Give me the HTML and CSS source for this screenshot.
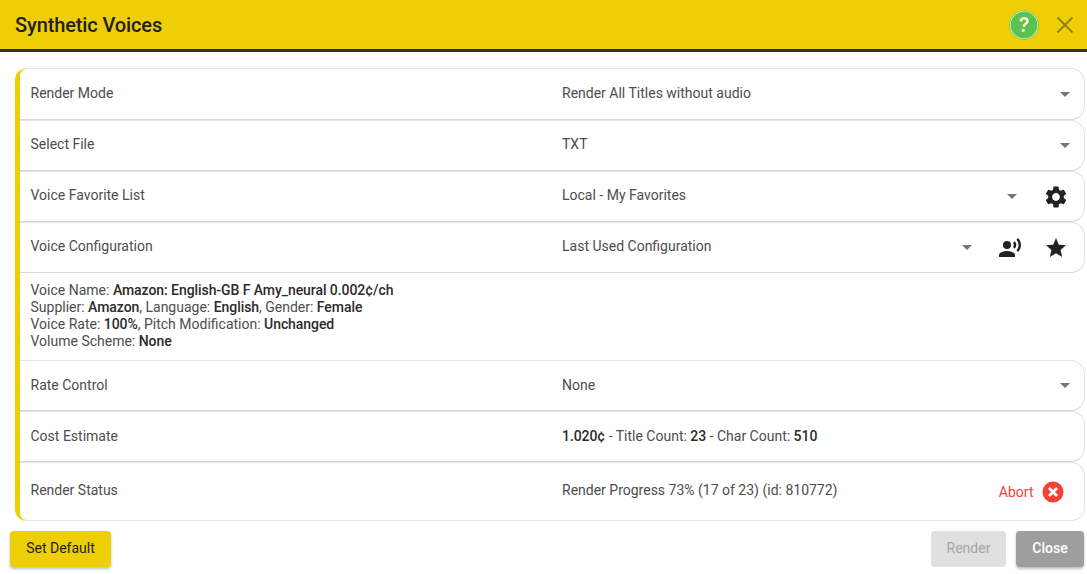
FILE: index.html
```html
<!DOCTYPE html>
<html lang="en">
<head>
<meta charset="utf-8">
<title>Synthetic Voices</title>
<link rel="stylesheet" href="styles.css">
</head>
<body>
<div class="dialog">
  <header class="titlebar">
    <h1 class="title">Synthetic Voices</h1>
    <div class="title-actions">
      <svg class="help" width="30" height="30" viewBox="0 0 30 30">
        <circle cx="15" cy="15" r="14" fill="#5cc14e" stroke="#f3f6d8" stroke-width="1.2"/>
        <circle cx="15" cy="15" r="14.6" fill="none" stroke="#66c455" stroke-width=".8"/>
        <path d="M10.4 11.6c.2-2.9 2.2-4.5 4.8-4.5 2.7 0 4.6 1.6 4.6 3.9 0 1.7-.9 2.6-2.1 3.5-1.1.8-1.4 1.3-1.4 2.6h-2.7c0-2 .5-2.9 1.8-3.9 1-.8 1.6-1.3 1.6-2.1 0-1-.8-1.6-1.8-1.6-1.1 0-1.9.7-2 2.1z" fill="#f6f6d0"/>
        <rect x="12.7" y="18.9" width="2.9" height="2.9" rx=".6" fill="#f6f6d0"/>
      </svg>
      <svg class="close-x" width="18" height="18" viewBox="0 0 18 18"><path d="M1.5 1.5l15 15M16.5 1.5l-15 15" stroke="#94800f" stroke-width="2" fill="none"/></svg>
    </div>
  </header>

  <main class="content">
    <div class="list">
      <div class="row row-first">
        <div class="label">Render Mode</div>
        <div class="value">Render All Titles without audio</div>
        <div class="controls"><span class="caret"></span></div>
      </div>
      <div class="row">
        <div class="label">Select File</div>
        <div class="value">TXT</div>
        <div class="controls"><span class="caret"></span></div>
      </div>
      <div class="row">
        <div class="label">Voice Favorite List</div>
        <div class="value">Local - My Favorites</div>
        <div class="controls controls-one">
          <span class="caret"></span>
          <svg class="icon" width="26" height="26" viewBox="0 0 24 24"><path fill="#212121" d="M19.14 12.94c.04-.3.06-.61.06-.94 0-.32-.02-.64-.07-.94l2.03-1.58a.49.49 0 0 0 .12-.61l-1.92-3.32a.488.488 0 0 0-.59-.22l-2.39.96c-.5-.38-1.03-.7-1.62-.94l-.36-2.54a.484.484 0 0 0-.48-.41h-3.84c-.24 0-.43.17-.47.41l-.36 2.54c-.59.24-1.13.57-1.62.94l-2.39-.96c-.22-.08-.47 0-.59.22L2.74 8.87c-.12.21-.08.47.12.61l2.03 1.58c-.05.3-.09.63-.09.94s.02.64.07.94l-2.03 1.58a.49.49 0 0 0-.12.61l1.92 3.32c.12.22.37.29.59.22l2.39-.96c.5.38 1.03.7 1.62.94l.36 2.54c.05.24.24.41.48.41h3.84c.24 0 .44-.17.47-.41l.36-2.54c.59-.24 1.13-.56 1.62-.94l2.39.96c.22.08.47 0 .59-.22l1.92-3.32c.12-.22.07-.47-.12-.61l-2.01-1.58zM12 15.6c-1.98 0-3.6-1.62-3.6-3.6s1.62-3.6 3.6-3.6 3.6 1.62 3.6 3.6-1.62 3.6-3.6 3.6z"/></svg>
        </div>
      </div>
      <div class="row">
        <div class="label">Voice Configuration</div>
        <div class="value">Last Used Configuration</div>
        <div class="controls controls-two">
          <span class="caret caret-spaced"></span>
          <svg class="icon" width="24" height="24" viewBox="0 0 24 24"><circle cx="9" cy="9" r="4" fill="#212121"/><path fill="#212121" d="M9 15c-2.67 0-8 1.34-8 4v2h16v-2c0-2.66-5.33-4-8-4z"/><path fill="#212121" d="M16.76 5.36l-1.68 1.69c.84 1.18.84 2.71 0 3.89l1.68 1.69c2.02-2.02 2.02-5.07 0-7.27zM20.07 2l-1.63 1.63c2.77 3.02 2.77 7.56 0 10.74L20.07 16c3.9-3.89 3.91-9.95 0-14z"/></svg>
          <svg class="icon" width="24" height="24" viewBox="0 0 24 24"><path fill="#212121" d="M12 17.27 18.18 21l-1.64-7.03L22 9.24l-7.19-.61L12 2 9.19 8.63 2 9.24l5.46 4.73L5.82 21z"/></svg>
        </div>
      </div>
      <div class="details">
        <div>Voice Name: <b>Amazon: English-GB F Amy_neural 0.002¢/ch</b></div>
        <div>Supplier: <b>Amazon</b>, Language: <b>English</b>, Gender: <b>Female</b></div>
        <div>Voice Rate: <b>100%</b>, Pitch Modification: <b>Unchanged</b></div>
        <div>Volume Scheme: <b>None</b></div>
      </div>
      <div class="row row-low">
        <div class="label">Rate Control</div>
        <div class="value">None</div>
        <div class="controls"><span class="caret"></span></div>
      </div>
      <div class="row row-low">
        <div class="label">Cost Estimate</div>
        <div class="value"><b>1.020¢</b> - Title Count: <b>23</b> - Char Count: <b>510</b></div>
      </div>
      <div class="row row-status">
        <div class="label">Render Status</div>
        <div class="value">Render Progress 73% (17 of 23) (id: 810772)</div>
        <div class="controls controls-abort">
          <span class="abort">Abort</span>
          <svg width="24" height="24" viewBox="0 0 24 24"><circle cx="12" cy="12" r="10.5" fill="#f44336"/><path d="M8 8l8 8M16 8l-8 8" stroke="#fff" stroke-width="2.7" fill="none"/></svg>
        </div>
      </div>
    </div>
  </main>

  <footer class="footer">
    <button class="btn btn-default" type="button">Set Default</button>
    <div class="footer-right">
      <button class="btn btn-disabled" type="button">Render</button>
      <button class="btn btn-close" type="button">Close</button>
    </div>
  </footer>
</div>
</body>
</html>
```

FILE: styles.css
```css
* { box-sizing: border-box; }
html, body { margin: 0; padding: 0; }
body {
  width: 1087px;
  height: 574px;
  overflow: hidden;
  background: #fff;
  font-family: Roboto, "Liberation Sans", sans-serif;
  font-size: 14px;
  color: #4d4d4d;
}
.dialog { display: flex; flex-direction: column; height: 100%; }
.titlebar {
  height: 52px;
  flex: none;
  display: flex;
  align-items: center;
  justify-content: space-between;
  background: #eecf07;
  border-bottom: 3px solid #332f2c;
  padding: 0 13px 0 15px;
}
.title { margin: 0; font-size: 20px; font-weight: 500; color: #212121; letter-spacing: -0.12px; }
.title-actions { display: flex; align-items: center; gap: 17px; }
.help, .close-x { display: block; }
.content { flex: none; padding: 16px 2px 0 15px; }
.list {
  border-left: 5px solid #eecf07;
  border-radius: 12px;
  height: 453px;
  display: flex;
  flex-direction: column;
}
.row {
  flex: none;
  height: 51px;
  display: flex;
  align-items: center;
  background: #fff;
  border: 1px solid #e4e4e4;
  border-left: 0;
  border-bottom-color: #d6d6d6;
  border-radius: 0 14px 14px 0;
  padding-left: 10.5px;
}
.row-first { height: 52px; border-top-left-radius: 8px; }
.row-status { height: 59px; border-bottom-left-radius: 8px; border-bottom-color: #e2e2e2; }
.label { width: 531.5px; flex: none; }
.value { flex: 1; min-width: 0; }
.label, .value { padding-bottom: 4px; }
.row-first .label, .row-first .value { padding-bottom: 3px; }
.row-low .label, .row-low .value { padding-bottom: 2px; }
b { font-weight: 500; color: #2b2b2b; letter-spacing: -0.07px; }
.controls {
  display: flex;
  align-items: center;
  justify-content: flex-end;
  padding-right: 14px;
}
.controls-one { gap: 26px; padding-right: 15px; }
.controls-two { gap: 22px; padding-right: 16px; }
.controls-abort { gap: 7.5px; padding-right: 19px; }
.caret {
  width: 0;
  height: 0;
  border-left: 5px solid transparent;
  border-right: 5px solid transparent;
  border-top: 5px solid #757575;
}
.caret-spaced { margin-right: 4px; }
.icon { display: block; }
.abort { color: #f44336; }
.details {
  flex: none;
  height: 87px;
  padding: 9px 0 0 10.5px;
  line-height: 17px;
}
.footer {
  flex: none;
  display: flex;
  justify-content: space-between;
  padding: 10px 3px 0 10px;
}
.footer-right { display: flex; gap: 10px; }
.btn {
  height: 36px;
  border: 0;
  border-radius: 4px;
  font-family: inherit;
  font-size: 14px;
  font-weight: 400;
  padding: 0 0 2px;
}
.btn-default {
  width: 101px;
  background: #eecf07;
  color: #212121;
  box-shadow: 0 2px 3px rgba(0,0,0,.25);
}
.btn-disabled { width: 75px; background: #e0e0e0; color: #a6a6a6; }
.btn-close {
  width: 68px;
  background: #9e9e9e;
  color: #fff;
  font-weight: 500;
  box-shadow: 0 2px 3px rgba(0,0,0,.25);
}
```
